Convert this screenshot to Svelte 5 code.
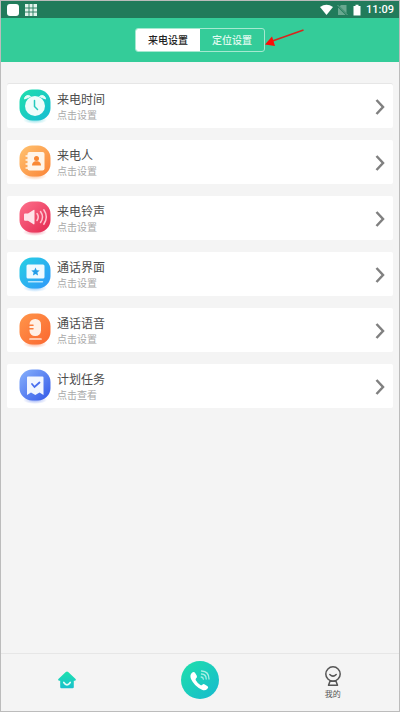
<script>
  let tab = $state('call');

  const items = [
    { icon: 'clock', title: '来电时间', hint: '点击设置', from: '#1fdcb0', to: '#17bfd0' },
    { icon: 'contact', title: '来电人', hint: '点击设置', from: '#ffbd6b', to: '#fb8a3c' },
    { icon: 'sound', title: '来电铃声', hint: '点击设置', from: '#fb6a86', to: '#e62f56' },
    { icon: 'screen', title: '通话界面', hint: '点击设置', from: '#27cbe6', to: '#2f9df8' },
    { icon: 'mic', title: '通话语音', hint: '点击设置', from: '#ff9147', to: '#fb6c33' },
    { icon: 'task', title: '计划任务', hint: '点击查看', from: '#7fa8fa', to: '#3c62ea' },
  ];
</script>

<div class="app">
  <div class="status">
    <svg class="notice" viewBox="0 0 32 12" aria-hidden="true">
      <rect x="0" y="0" width="12" height="12" rx="3" fill="#fff" />
      <path d="M18 0h12v12H18z" fill="#e4f3ed" />
      <path d="M22 0v12M26 0v12M18 4h12M18 8h12" stroke="#237c5c" stroke-width=".9" />
    </svg>
    <div class="system">
      <svg class="signals" viewBox="0 0 42 12" aria-hidden="true">
        <path d="M0 3Q6.500 -1.500 13 3L6.500 11z" fill="#fff" />
        <path d="M18 4l3-3h5.500v10H18z" fill="#68a890" />
        <path d="M17 1l10 10" stroke="#237c5c" stroke-width="2" />
        <path d="M17.500 1l10 10" stroke="#68a890" stroke-width="1" />
        <path d="M33.500 2h2V.8h3V2h2v9.500h-7z" fill="#fff" />
      </svg>
      <span>11:09</span>
    </div>
  </div>

  <header>
    <div class="tabs">
      <button class:active={tab === 'call'} onclick={() => (tab = 'call')}>来电设置</button>
      <button class:active={tab === 'location'} onclick={() => (tab = 'location')}>定位设置</button>
      <svg class="pointer" viewBox="0 0 40 20" aria-hidden="true">
        <path d="M39.500 1L7 12.500" stroke="#d8251d" stroke-width="1.600" />
        <path d="M1 15.500L8 7.500L11 17z" fill="#fb0d08" />
      </svg>
    </div>
  </header>

  <main>
    {#each items as item}
      <button class="row">
        <svg class="icon" viewBox="0 0 32 36" aria-hidden="true">
          <defs>
            <linearGradient id="bg-{item.icon}" x1="0" y1="0" x2="1" y2="1">
              <stop offset="0.100" stop-color={item.from} />
              <stop offset="0.900" stop-color={item.to} />
            </linearGradient>
            <radialGradient id="glow-{item.icon}">
              <stop offset="0" stop-color={item.to} stop-opacity="0.500" />
              <stop offset="1" stop-color={item.to} stop-opacity="0" />
            </radialGradient>
          </defs>
          <ellipse cx="16" cy="31" rx="12" ry="4" fill="url(#glow-{item.icon})" />
          <path d="M13 .5h6c3.500 0 6 1.200 8.500 3.500 2.800 2.700 4 5.500 4 9v6c0 3.500-1.200 6.300-4 9-2.500 2.300-5 3.500-8.500 3.500h-6c-3.500 0-6-1.200-8.500-3.500-2.800-2.700-4-5.500-4-9v-6c0-3.500 1.200-6.300 4-9C7 1.700 9.500.5 13 .5z" fill="url(#bg-{item.icon})" />
          {#if item.icon === 'clock'}
            <path d="M5.500 10a3.500 3.500 0 0 1 6-2.500zM26.500 10a3.500 3.500 0 0 0-6-2.500z" fill="#e8fcf8" stroke="#e8fcf8" stroke-width="1" stroke-linejoin="round" />
            <circle cx="16" cy="17" r="10" fill="#effdfb" />
            <path d="M15.500 11.500v6l3 3" fill="none" stroke="#26cbbd" stroke-width="1.500" stroke-linecap="round" />
          {:else if item.icon === 'contact'}
            <rect x="8.500" y="7" width="17" height="18.500" rx="2" fill="#fff5e9" />
            <path d="M7 11h3M7 15h3M7 19h3M7 23h3" stroke="#fff5e9" stroke-width="1.300" stroke-linecap="round" />
            <circle cx="17.500" cy="13.500" r="2.500" fill="#f98834" />
            <path d="M13 20.500q0-3.500 3.300-4.300h2.400q3.300.8 3.300 4.300z" fill="#f98834" />
          {:else if item.icon === 'sound'}
            <path d="M5 13.500q0-1 1-1h3l5.500-3.500q1-.6 1 .6v13q0 1.200-1 .6L9 19.700H6q-1 0-1-1z" fill="#ffe3e9" />
            <path d="M18 12.500q2.500 3.500 0 7M21.500 10.500q4 5.500 0 11M24.800 8.800q5 7.200 0 14.400" fill="none" stroke="#ffc4d0" stroke-width="1.500" stroke-linecap="round" />
          {:else if item.icon === 'screen'}
            <rect x="7.500" y="7.500" width="18" height="14" rx="1.500" fill="#f0faff" />
            <path d="M16.500 10.500l1.200 2.700 3 .3-2.300 2 .7 2.900-2.600-1.500-2.600 1.500.7-2.900-2.300-2 3-.3z" fill="#249de8" />
            <path d="M9.500 24.800h14" stroke="#b4e4fd" stroke-width="1.400" stroke-linecap="round" />
          {:else if item.icon === 'mic'}
            <rect x="10.500" y="6" width="11.500" height="17" rx="5.500" fill="#fff0e6" />
            <path d="M10 12.300h4M10 15.800h4" stroke="#fb7c3c" stroke-width="1.500" stroke-linecap="round" />
            <path d="M11 26h11" stroke="#ffe1d0" stroke-width="1.700" stroke-linecap="round" />
          {:else}
            <path d="M9 7.500h14.500q1 0 1 1V26l-4-2.500-4.200 2.500-4.300-2.500L8 26V8.500q0-1 1-1z" fill="#f2f6ff" />
            <path d="M13 15l2.500 3 5-4.500" fill="none" stroke="#4a6fee" stroke-width="1.800" stroke-linecap="round" />
          {/if}
        </svg>
        <span class="text">
          <span class="title">{item.title}</span>
          <span class="hint">{item.hint}</span>
        </span>
        <svg class="chevron" viewBox="0 0 10 16" aria-hidden="true">
          <path d="M1.500 1L8 8l-6.500 7" fill="none" stroke="#808080" stroke-width="2.500" />
        </svg>
      </button>
    {/each}
  </main>

  <nav>
    <a href="#home" aria-label="首页">
      <svg class="home" viewBox="0 0 18 18" aria-hidden="true">
        <defs>
          <linearGradient id="home-fill" x1="0" y1="0" x2="0" y2="1">
            <stop offset="0" stop-color="#1de2ad" />
            <stop offset="1" stop-color="#19c0cc" />
          </linearGradient>
        </defs>
        <path d="M9 .5q.6 0 1.200.6L17.600 8q.8 1.300-.6 1.700h-1.200v6.300q0 1.200-1.200 1.200H3.400q-1.200 0-1.200-1.200V9.700H1Q-.4 9.300.4 8l7.400-6.900Q8.400.5 9 .5z" fill="url(#home-fill)" />
        <path d="M5.800 11.500q3.200 4.800 6.400 0" fill="none" stroke="#e5fbf7" stroke-width="1.700" stroke-linecap="round" />
      </svg>
    </a>
    <a href="#call" aria-label="拨打">
      <svg class="call" viewBox="0 0 38 38" aria-hidden="true">
        <defs>
          <linearGradient id="call-fill" x1="0" y1="0" x2="1" y2="1">
            <stop offset="0.100" stop-color="#1edcae" />
            <stop offset="0.900" stop-color="#17bdcc" />
          </linearGradient>
        </defs>
        <circle cx="19" cy="19" r="19" fill="url(#call-fill)" />
        <path d="M10.500 12.200q2.200-2 3.500-.5l1.800 3q.7 1.500-.7 2.600-.9.800-.3 1.900 1.500 2.800 4.600 4.900 1 .6 1.900-.3 1.200-1.200 2.500-.4l2.800 1.800q1.400 1.200-.4 2.800-2.200 2-5.200.7-7.500-3.200-11-10.700-1.400-3.600.5-5.800z" fill="#fff" />
        <path d="M20.500 10q7.500.3 7.500 8M20.500 13q4.700.3 4.700 5M20.200 16q2 .2 2.200 2.200" fill="none" stroke="#a9efe3" stroke-width="1.300" stroke-linecap="round" />
      </svg>
    </a>
    <a class="labelled" href="#mine">
      <svg class="mine" viewBox="0 0 18 20" aria-hidden="true">
        <g fill="none" stroke="#555" stroke-width="1.500" stroke-linecap="round" stroke-linejoin="round">
          <circle cx="9" cy="8" r="7.200" />
          <path d="M5.800 8.500q3.200 3.200 6.400 0" />
          <path d="M6 15.200l-1.500 4h9l-1.500-4z" />
        </g>
      </svg>
      <span>我的</span>
    </a>
  </nav>
</div>

<style>
  :global(body) {
    margin: 0;
  }

  .app {
    box-sizing: border-box;
    min-height: 100vh;
    display: flex;
    flex-direction: column;
    border: 1px solid #bcbcbc;
    background: #f4f4f4;
    font-family: "Noto Sans", "Noto Sans CJK SC", sans-serif;
  }

  button {
    margin: 0;
    padding: 0;
    border: 0;
    background: none;
    font-family: inherit;
    cursor: pointer;
  }

  svg {
    display: block;
    flex: none;
  }

  .status {
    height: 17px;
    padding: 0 5px 0 6px;
    display: flex;
    align-items: center;
    justify-content: space-between;
    background: #217b5b;
    color: #fff;
    font-family: Roboto, sans-serif;
    font-size: 11px;
    line-height: 16px;
    font-weight: 500;
  }

  .notice {
    width: 32px;
    height: 12px;
  }

  .system {
    display: flex;
    align-items: center;
    gap: 4px;
  }

  .signals {
    width: 42px;
    height: 12px;
  }

  header {
    height: 44px;
    display: flex;
    align-items: center;
    justify-content: center;
    background: #34cc99;
  }

  .tabs {
    position: relative;
    display: flex;
    border: 1px solid #a5e9d0;
    border-radius: 3px;
  }

  .tabs button {
    width: 64px;
    height: 22px;
    font-size: 10px;
    line-height: 16px;
    font-weight: 500;
    color: #e0faf0;
  }

  .tabs button.active {
    border-radius: 2px 0 0 2px;
    background: #fff;
    color: #222;
  }

  .tabs button.active:last-of-type {
    border-radius: 0 2px 2px 0;
  }

  .pointer {
    position: absolute;
    left: 100%;
    top: 0;
    width: 40px;
    height: 20px;
  }

  main {
    flex: 1;
    padding: 22px 6px 12px;
    display: flex;
    flex-direction: column;
    gap: 12px;
  }

  .row {
    height: 44px;
    padding: 2px 8px 0 12px;
    display: flex;
    align-items: center;
    gap: 6px;
    border-radius: 2px;
    background: #fff;
    text-align: left;
  }

  .row:first-child {
    box-shadow: 0 -1px #e6e6e6;
  }

  .icon {
    width: 32px;
    height: 36px;
  }

  .text {
    flex: 1;
    display: flex;
    flex-direction: column;
  }

  .title {
    font-size: 12px;
    line-height: 16px;
    color: #4c4c4c;
  }

  .hint {
    font-size: 10px;
    line-height: 14px;
    color: #aaa;
  }

  .chevron {
    width: 10px;
    height: 16px;
  }

  nav {
    height: 57px;
    display: flex;
    border-top: 1px solid #e6e6e6;
  }

  nav a {
    flex: 1;
    display: flex;
    flex-direction: column;
    align-items: center;
    justify-content: center;
    gap: 2px;
    padding-bottom: 6px;
    color: #555;
    font-size: 8px;
    line-height: 12px;
    text-decoration: none;
  }

  nav .labelled {
    padding-bottom: 0;
  }

  .home {
    width: 18px;
    height: 18px;
  }

  .call {
    width: 38px;
    height: 38px;
  }

  .mine {
    width: 18px;
    height: 20px;
  }
</style>
